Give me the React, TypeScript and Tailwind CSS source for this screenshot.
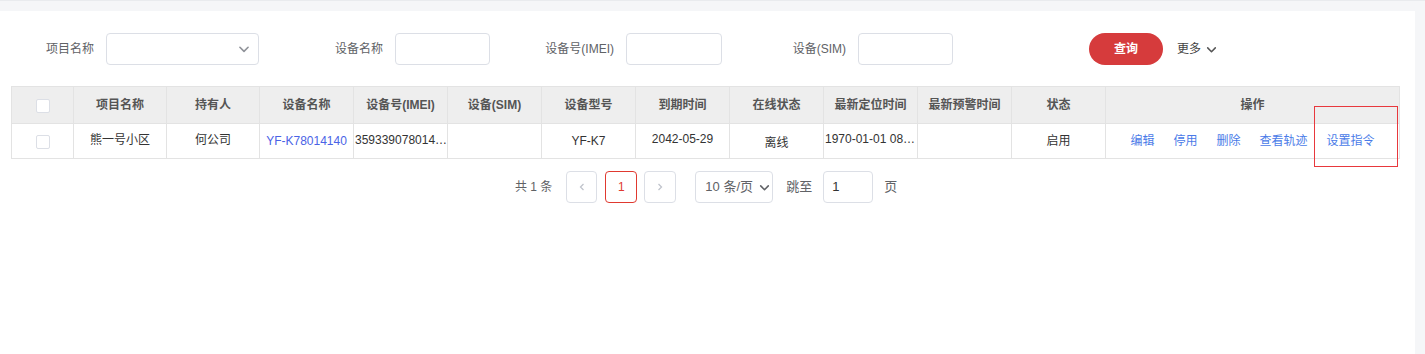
import React from "react";

const font = { fontFamily: '"Liberation Sans", "Noto Sans CJK SC", sans-serif' };

function Chevron({ className = "" }: { className?: string }) {
  return (
    <svg viewBox="0 0 12 12" className={className} fill="none" stroke="currentColor" strokeWidth="1.4" strokeLinecap="round" strokeLinejoin="round">
      <path d="M2.5 4.5 L6 8 L9.5 4.5" />
    </svg>
  );
}

function Checkbox() {
  return <span className="inline-block w-[14px] h-[14px] bg-white border border-[#dcdfe6] rounded-[2px] align-middle" />;
}

const headers = ["项目名称", "持有人", "设备名称", "设备号(IMEI)", "设备(SIM)", "设备型号", "到期时间", "在线状态", "最新定位时间", "最新预警时间", "状态", "操作"];
const widths = [93, 93, 94, 94, 94, 94, 94, 94, 94, 94, 94, 294];

export default function App() {
  return (
    <div className="w-[1425px] h-[354px] bg-[#f5f6f8] text-[12px] text-[#333] overflow-hidden" style={font}>
      <div className="h-[11px] border-t border-[#e9ebee]" />
      <div className="w-[1415px] h-[343px] bg-white relative">
        {/* filter row */}
        <div className="flex items-center pt-[22px] h-[54px]">
          <div className="flex items-center">
            <span className="w-[94px] text-right text-[#606266]">项目名称</span>
            <div className="ml-[12px] w-[153px] h-[32px] border border-[#dcdfe6] rounded-[4px] flex items-center justify-end pr-[7px] text-[#909399]">
              <Chevron className="w-[14px] h-[14px]" />
            </div>
          </div>
          <div className="flex items-center ml-[30px]">
            <span className="w-[94px] text-right text-[#606266]">设备名称</span>
            <div className="ml-[12px] w-[95px] h-[32px] border border-[#dcdfe6] rounded-[4px]" />
          </div>
          <div className="flex items-center ml-[30px]">
            <span className="w-[94px] text-right text-[#606266]">设备号(IMEI)</span>
            <div className="ml-[12px] w-[96px] h-[32px] border border-[#dcdfe6] rounded-[4px]" />
          </div>
          <div className="flex items-center ml-[30px]">
            <span className="w-[94px] text-right text-[#606266]">设备(SIM)</span>
            <div className="ml-[12px] w-[95px] h-[32px] border border-[#dcdfe6] rounded-[4px]" />
          </div>
          <div className="ml-[136px] w-[74px] h-[32px] rounded-full bg-[#d63b3c] text-white font-bold flex items-center justify-center">查询</div>
          <div className="ml-[14px] flex items-center text-[#444]">
            <span>更多</span>
            <Chevron className="w-[13px] h-[13px] ml-[4px] text-[#555]" />
          </div>
        </div>

        {/* table */}
        <table className="ml-[11px] mt-[21px] border-collapse table-fixed w-[1388px]">
          <colgroup>
            <col style={{ width: 62 }} />
            {widths.map((w, i) => (
              <col key={i} style={{ width: w }} />
            ))}
          </colgroup>
          <thead>
            <tr className="h-[37px] bg-[#eeeeee]">
              <th className="border border-[#e3e3e3] text-center font-normal">
                <Checkbox />
              </th>
              {headers.map((h) => (
                <th key={h} className="border border-[#e3e3e3] text-center font-bold text-[#555] whitespace-nowrap">
                  {h}
                </th>
              ))}
            </tr>
          </thead>
          <tbody>
            <tr className="h-[35px]">
              <td className="border border-[#e3e3e3] text-center">
                <Checkbox />
              </td>
              <td className="border border-[#e3e3e3] text-center pb-[3px]">熊一号小区</td>
              <td className="border border-[#e3e3e3] text-center pb-[3px]">何公司</td>
              <td className="border border-[#e3e3e3] text-center text-[#4a63e6] whitespace-nowrap overflow-hidden">YF-K78014140</td>
              <td className="border border-[#e3e3e3] pl-[1px] pb-[3px] whitespace-nowrap overflow-hidden">359339078014…</td>
              <td className="border border-[#e3e3e3]" />
              <td className="border border-[#e3e3e3] text-center">YF-K7</td>
              <td className="border border-[#e3e3e3] text-center pb-[5px]">2042-05-29</td>
              <td className="border border-[#e3e3e3] text-center pt-[3px]">离线</td>
              <td className="border border-[#e3e3e3] pl-[1px] pb-[4px] whitespace-nowrap overflow-hidden">1970-01-01 08…</td>
              <td className="border border-[#e3e3e3]" />
              <td className="border border-[#e3e3e3] text-center">启用</td>
              <td className="border border-[#e3e3e3] text-center">
                <div className="flex justify-center gap-[19px] text-[#4a7be8]">
                  <span>编辑</span>
                  <span>停用</span>
                  <span>删除</span>
                  <span>查看轨迹</span>
                  <span>设置指令</span>
                </div>
              </td>
            </tr>
          </tbody>
        </table>

        {/* pagination */}
        <div className="flex items-center mt-[12px] pl-[515px] text-[#606266]">
          <span>共 1 条</span>
          <div className="ml-[14px] w-[31px] h-[32px] border border-[#dcdfe6] rounded-[4px] flex items-center justify-center text-[#c0c4cc]">
            <svg viewBox="0 0 12 12" className="w-[12px] h-[12px]" fill="none" stroke="currentColor" strokeWidth="1.3"><path d="M7.5 3 L4.5 6 L7.5 9" /></svg>
          </div>
          <div className="ml-[8px] w-[32px] h-[32px] border border-[#e0392f] rounded-[4px] flex items-center justify-center text-[#e0392f]">1</div>
          <div className="ml-[7px] w-[32px] h-[32px] border border-[#dcdfe6] rounded-[4px] flex items-center justify-center text-[#c0c4cc]">
            <svg viewBox="0 0 12 12" className="w-[12px] h-[12px]" fill="none" stroke="currentColor" strokeWidth="1.3"><path d="M4.5 3 L7.5 6 L4.5 9" /></svg>
          </div>
          <div className="ml-[19px] w-[78px] h-[32px] border border-[#dcdfe6] rounded-[4px] flex items-center pl-[9px] text-[#606266] text-[13px]">
            <span>10 条/页</span>
            <Chevron className="w-[13px] h-[13px] ml-[5px] text-[#606266]" />
          </div>
          <span className="ml-[13px] text-[13px]">跳至</span>
          <div className="ml-[11px] w-[50px] h-[32px] border border-[#dcdfe6] rounded-[4px] flex items-center pl-[8px] text-[#333] text-[13px]">1</div>
          <span className="ml-[11px] text-[13px]">页</span>
        </div>

        {/* annotation box */}
        <div className="absolute left-[1314px] top-[95px] w-[84px] h-[61px] border border-[#e8383d] pointer-events-none" />
      </div>
    </div>
  );
}
